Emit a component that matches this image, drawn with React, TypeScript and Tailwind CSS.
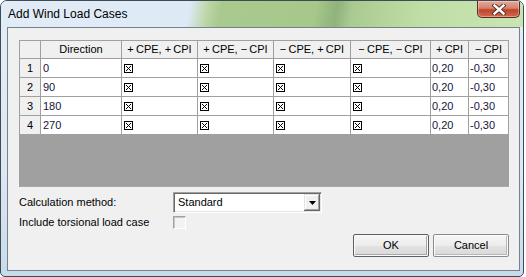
import React from "react";

const COLS = "grid grid-cols-[21px_81px_76px_76px_77px_80px_38px_40px]";

function Check() {
  return (
    <svg width="9" height="9" viewBox="0 0 9 9" className="block">
      <rect x="0.5" y="0.5" width="8" height="8" fill="white" stroke="#000" strokeWidth="1" />
      <path d="M2 2 L7 7 M7 2 L2 7" stroke="#000" strokeWidth="1" />
    </svg>
  );
}

function CloseX() {
  return (
    <svg width="14" height="11" viewBox="0 0 14 11" className="block">
      <path d="M2.5 1.5 L11.5 9.5 M11.5 1.5 L2.5 9.5" stroke="#4a2a22" strokeWidth="4.2" strokeLinecap="square" />
      <path d="M2.5 1.5 L11.5 9.5 M11.5 1.5 L2.5 9.5" stroke="#ffffff" strokeWidth="2.4" strokeLinecap="square" />
    </svg>
  );
}

const headers = ["", "Direction", "+\u2009CPE, +\u2009CPI", "+\u2009CPE, \u2212\u2009CPI", "\u2212\u2009CPE, +\u2009CPI", "\u2212\u2009CPE, \u2212\u2009CPI", "+\u2009CPI", "\u2212\u2009CPI"];
const rows = [
  ["1", "0"],
  ["2", "90"],
  ["3", "180"],
  ["4", "270"],
];

export default function App() {
  return (
    <div className="w-[526px] h-[277px] bg-white font-['Liberation_Sans',Arial,sans-serif] text-[11px] leading-none text-black">
      <div className="w-[524px] h-[277px] flex flex-col rounded-t-[7px] rounded-b-[5px] border border-[#3f4a55] bg-[linear-gradient(180deg,#e3edf7_0%,#dde8f3_60%,#c8dbe9_100%)] overflow-hidden">
        {/* Title bar */}
        <div className="h-[26px] shrink-0 flex items-start bg-[linear-gradient(100deg,#e1ecf7_0%,#dde9f5_36%,#bcd6a8_39.5%,#a9ca8e_42%,#a6c88b_60%,#90b27c_64%,#a9ca90_67%,#bfdea6_80%,#c9e5b3_100%)]">
          <div className="pl-[7px] pt-[6px] flex-1 text-[12px] leading-[14px] text-black">Add Wind Load Cases</div>
          <div className="mr-[3px] w-[43px] h-[17px] rounded-b-[5px] border border-t-0 border-[#5b2a20] bg-[linear-gradient(180deg,#e8a89a_0%,#d4826e_45%,#c0432a_55%,#cf6a4c_100%)] flex items-center justify-center shadow-[inset_0_0_0_1px_rgba(255,255,255,0.35)]">
            <CloseX />
          </div>
        </div>
        {/* Client area */}
        <div className="flex-1 ml-[6px] mr-[3px] mb-[5px] border border-[#74828f] bg-[#f0f0f0] pt-[12px] pl-[11px] pr-[10px] flex flex-col">
          {/* Grid */}
          <div className="w-[490px] border-l border-t border-[#a0a0a0]">
            <div className={COLS}>
              {headers.map((h, i) => (
                <div key={i} className="h-[18px] border-r border-b border-[#a0a0a0] bg-[#f0f0f0] flex items-center justify-center whitespace-nowrap">
                  {h}
                </div>
              ))}
              {rows.map((r) => (
                <React.Fragment key={r[0]}>
                  <div className="h-[19px] border-r border-b border-[#a0a0a0] bg-[#f0f0f0] flex items-center justify-center">{r[0]}</div>
                  <div className="h-[19px] border-r border-b border-[#a0a0a0] bg-white flex items-center pl-[2px] text-[#14143a]">{r[1]}</div>
                  {[0, 1, 2, 3].map((k) => (
                    <div key={k} className="h-[19px] border-r border-b border-[#a0a0a0] bg-white flex items-center pl-[2px]">
                      <Check />
                    </div>
                  ))}
                  <div className="h-[19px] border-r border-b border-[#a0a0a0] bg-white flex items-center pl-[1px] text-[#14143a]">0,20</div>
                  <div className="h-[19px] border-r border-b border-[#a0a0a0] bg-white flex items-center pl-[1px] text-[#14143a]">-0,30</div>
                </React.Fragment>
              ))}
            </div>
            <div className="h-[52px] bg-[#a0a0a0] border-b border-[#a8a8a8]" />
          </div>
          {/* Calculation method */}
          <div className="mt-[5px] h-[21px] flex items-center">
            <div className="w-[154px]">Calculation method:</div>
            <div className="w-[149px] h-[21px] flex items-center bg-white border border-t-[#a0a0a0] border-l-[#a0a0a0] border-r-[#ffffff] border-b-[#ffffff] shadow-[inset_1px_1px_0_#696969,inset_-1px_-1px_0_#e3e3e3]">
              <div className="flex-1 pl-[4px] pb-[1px]">Standard</div>
              <div className="w-[16px] h-[17px] mr-[1px] bg-[#f0f0f0] flex items-center justify-center shadow-[inset_-1px_-1px_0_#696969,inset_1px_1px_0_#e3e3e3,inset_-2px_-2px_0_#a0a0a0,inset_2px_2px_0_#ffffff]">
                <svg width="7" height="4" viewBox="0 0 7 4" className="block">
                  <path d="M0 0 H7 L3.5 4 Z" fill="#000" />
                </svg>
              </div>
            </div>
          </div>
          {/* Torsional */}
          <div className="mt-[3px] h-[13px] flex items-center">
            <div className="w-[154px]">Include torsional load case</div>
            <div className="w-[13px] h-[13px] bg-[#f3f3f3] border border-t-[#a0a0a0] border-l-[#a0a0a0] border-r-[#ffffff] border-b-[#ffffff] shadow-[inset_1px_1px_0_#c8c8c8]" />
          </div>
          {/* Buttons */}
          <div className="mt-[5px] flex justify-end gap-[4px]">
            <button className="w-[76px] h-[23px] rounded-[2px] border border-[#5f5f5f] bg-[linear-gradient(180deg,#f6f6f6_0%,#ececec_50%,#e2e2e2_51%,#d9d9d9_100%)] shadow-[inset_0_0_0_1px_#fbfbfb,inset_-1px_-1px_0_1px_#a8a8a8] flex items-center justify-center text-[11px]">
              OK
            </button>
            <button className="w-[76px] h-[23px] rounded-[2px] border border-[#8a8a8a] bg-[linear-gradient(180deg,#f6f6f6_0%,#ececec_50%,#e2e2e2_51%,#d9d9d9_100%)] shadow-[inset_0_0_0_1px_#fbfbfb,inset_-1px_-1px_0_1px_#b8b8b8] flex items-center justify-center text-[11px]">
              Cancel
            </button>
          </div>
        </div>
      </div>
    </div>
  );
}
